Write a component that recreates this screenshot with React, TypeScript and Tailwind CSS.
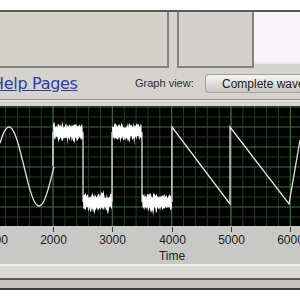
import React from 'react';

// simple seeded random so the noise is the same every render
function makeRand(seed: number) {
  let s = seed;
  return () => {
    s = (s * 1103515245 + 12345) % 2147483648;
    return s / 2147483648;
  };
}

const rand = makeRand(7);

// a jagged white band: top edge out, bottom edge back
function band(x0: number, x1: number, center: number) {
  const top: string[] = [];
  const bottom: string[] = [];
  for (let x = x0; x <= x1; x += 0.7) {
    const up = center - 4 - rand() * 5 - (rand() > 0.85 ? rand() * 4 : 0);
    top.push(`${x.toFixed(1)},${up.toFixed(1)}`);
  }
  for (let x = x1; x >= x0; x -= 0.7) {
    const down = center + 4 + rand() * 5 + (rand() > 0.8 ? rand() * 6 : 0);
    bottom.push(`${x.toFixed(1)},${down.toFixed(1)}`);
  }
  return [...top, ...bottom].join(' ');
}

function sine() {
  const pts: string[] = [];
  for (let x = 0; x <= 54; x += 1) {
    const y = 60.5 - 39.5 * Math.cos((2 * Math.PI * (x - 9)) / 60);
    pts.push(`${x},${y.toFixed(1)}`);
  }
  return pts.join(' ');
}

const HI = 26;
const LO = 96;
const major = [-6.3, 53, 112.3, 171.7, 231, 290.3];
const ticks = [
  { x: -6, label: '1000' },
  { x: 53, label: '2000' },
  { x: 112, label: '3000' },
  { x: 172, label: '4000' },
  { x: 231, label: '5000' },
  { x: 290, label: '6000' },
];

function Graph() {
  const minorX: number[] = [];
  for (let x = -6.3; x < 300; x += 11.866) minorX.push(x);
  const rowsMinor = [11, 31, 51, 71, 91, 111];
  const rowsMajor = [1, 21, 41, 61, 81, 101];

  return (
    <svg width="300" height="120" viewBox="0 0 300 120" className="block bg-black">
      {minorX.map((x, i) => (
        <line key={'vx' + i} x1={x} y1="0" x2={x} y2="120" stroke="#223d25" strokeWidth="1" />
      ))}
      {rowsMinor.map(y => (
        <line key={'hm' + y} x1="0" y1={y} x2="300" y2={y} stroke="#223d25" strokeWidth="1" />
      ))}
      {rowsMajor.map(y => (
        <line key={'hM' + y} x1="0" y1={y} x2="300" y2={y} stroke="#40704a" strokeWidth="1" />
      ))}
      {major.map(x => (
        <line key={'vM' + x} x1={x} y1="0" x2={x} y2="120" stroke="#40704a" strokeWidth="1" />
      ))}

      {/* sine */}
      <polyline points={sine()} fill="none" stroke="#e4e4e4" strokeWidth="1.3" />

      {/* noisy square wave */}
      <line x1="53" y1="60" x2="53" y2={HI} stroke="#f4f4f4" strokeWidth="1.3" />
      <polygon points={band(53, 83, HI)} fill="#ffffff" />
      <line x1="83" y1={HI} x2="83" y2={LO} stroke="#f4f4f4" strokeWidth="1.2" />
      <polygon points={band(83, 112, LO)} fill="#ffffff" />
      <line x1="112" y1={LO} x2="112" y2={HI} stroke="#f4f4f4" strokeWidth="1.2" />
      <polygon points={band(112, 142, HI)} fill="#ffffff" />
      <line x1="142" y1={HI} x2="142" y2={LO} stroke="#f4f4f4" strokeWidth="1.2" />
      <polygon points={band(142, 172, LO)} fill="#ffffff" />

      {/* sawtooth */}
      <polyline
        points={`172,${LO} 172,21 230,98 230,21 289,98 300,34`}
        fill="none"
        stroke="#e4e4e4"
        strokeWidth="1.3"
      />
    </svg>
  );
}

export default function App() {
  return (
    <div className="w-[300px] h-[300px] overflow-hidden bg-white font-['Liberation_Sans',Arial,sans-serif]">
      <div className="h-[10px] bg-white" />
      <div className="h-[2px] bg-[#5c5a57]" />

      {/* top panels */}
      <div className="flex h-[56px] bg-[#d6d3ce]">
        <div className="w-[169px] bg-[#d8d1c9] border-r-2 border-b-2 border-[#85827c]" />
        <div className="w-[8px]" />
        <div className="w-[77px] bg-[#d3d1cc] border-l-2 border-r-2 border-b-2 border-[#85827c]" />
        <div className="flex-1 flex flex-col">
          <div className="h-[50px] bg-[#f6f4f9]" />
          <div className="h-[2px] bg-[#ebe9e6]" />
        </div>
      </div>

      {/* controls row */}
      <div className="flex items-center h-[31px] bg-[#d6d3ce]">
        <span className="ml-[-8px] w-[143px] shrink-0 text-[16px] leading-none text-[#2c3ea8] underline font-['DejaVu_Sans',sans-serif] tracking-[-0.3px]">
          Help Pages
        </span>
        <span className="w-[70px] shrink-0 text-[11px] text-[#303030]">Graph view:</span>
        <div className="h-[19px] flex-1 flex items-center whitespace-nowrap rounded-l-[4px] border border-r-0 border-[#a3a19d] bg-gradient-to-b from-[#f6f6f5] to-[#c8c6c2] pl-[16px] text-[12px] text-[#202020]">
          Complete wave
        </div>
      </div>
      <div className="h-[1px] bg-[#8e8b86]" />
      <div className="h-[1px] bg-[#ecebe8]" />
      <div className="h-[5px] bg-[#d6d3ce]" />

      <Graph />

      {/* axis */}
      <div className="relative h-[38px] bg-[#c8c8c7]">
        {ticks.map(t => (
          <React.Fragment key={t.label}>
            <div className="absolute top-[1px] w-[1px] h-[5px] bg-[#3a3a3a]" style={{ left: t.x }} />
            <span
              className="absolute top-[7px] w-[40px] -ml-[20px] text-center text-[12px] leading-[14px] text-[#1c1c1c]"
              style={{ left: t.x + 0.5 }}
            >
              {t.label}
            </span>
          </React.Fragment>
        ))}
        <span className="absolute top-[23px] left-[152px] w-[40px] text-center text-[12px] leading-[14px] text-[#1c1c1c]">
          Time
        </span>
      </div>

      {/* bottom frame */}
      <div className="h-[2px] bg-[#efede9]" />
      <div className="h-[12px] bg-[#dedad3]" />
      <div className="h-[2px] bg-[#5a5856]" />
      <div className="h-[8px] bg-[#c6c4c0]" />
      <div className="h-[2px] bg-[#3e3d3b]" />
    </div>
  );
}
